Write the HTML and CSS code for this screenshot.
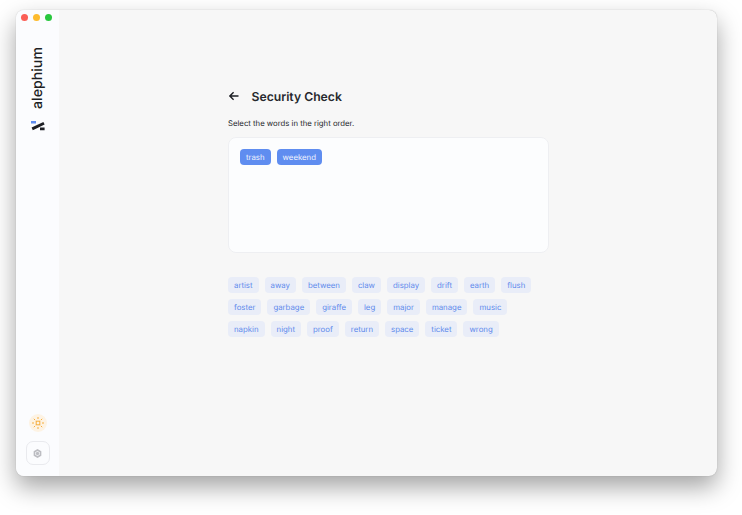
FILE: index.html
```html
<!DOCTYPE html>
<html lang="en">
<head>
  <meta charset="UTF-8">
  <title>Security Check</title>
  <link rel="stylesheet" href="styles.css">
</head>
<body>
  <div class="window">
    <div class="lights">
      <span class="light red"></span>
      <span class="light yellow"></span>
      <span class="light green"></span>
    </div>

    <div class="sidebar">
      <div class="brand">
        <div class="wordmark">alephium</div>
        <svg class="logo" width="14" height="10" viewBox="0 0 14 10">
          <path d="M0 0h5v2.4H0z" fill="#5f8df0"/>
          <path d="M0.6 6.6L12.4 1l1.2 2.4L1.8 9.2z" fill="#1d1f24"/>
          <path d="M9 6.6h4.6v2.6H9z" fill="#1d1f24"/>
        </svg>
      </div>
      <div class="side-bottom">
        <div class="theme-btn">
          <svg width="12" height="12" viewBox="0 0 12 12" fill="none" stroke="#f6ad3c" stroke-width="1">
            <rect x="4.2" y="4.2" width="3.6" height="3.6"/>
            <path d="M6 0v2M6 10v2M0 6h2M10 6h2M1.8 1.8l1.3 1.3M8.9 8.9l1.3 1.3M1.8 10.2l1.3-1.3M8.9 3.1l1.3-1.3"/>
          </svg>
        </div>
        <div class="settings-btn">
          <svg width="9" height="9" viewBox="0 0 9 9" fill="none" stroke="#bcbdc2" stroke-width="1.7">
            <path d="M4.5 1L7.5 2.7V6.3L4.5 8L1.5 6.3V2.7Z"/>
            <circle cx="4.5" cy="4.5" r="0.8"/>
          </svg>
        </div>
      </div>
    </div>

    <div class="main">
      <div class="title-row">
        <svg class="back" width="12" height="12" viewBox="0 0 12 12" fill="none" stroke="#1d1f24" stroke-width="1.4">
          <path d="M10.5 6H2M5.6 2.2L1.8 6l3.8 3.8"/>
        </svg>
        <h1>Security Check</h1>
      </div>
      <p class="hint">Select the words in the right order.</p>

      <div class="selected-box">
        <span class="chip active">trash</span>
        <span class="chip active">weekend</span>
      </div>

      <div class="words">
        <span class="chip">artist</span>
        <span class="chip">away</span>
        <span class="chip">between</span>
        <span class="chip">claw</span>
        <span class="chip">display</span>
        <span class="chip">drift</span>
        <span class="chip">earth</span>
        <span class="chip">flush</span>
        <span class="chip">foster</span>
        <span class="chip">garbage</span>
        <span class="chip">giraffe</span>
        <span class="chip">leg</span>
        <span class="chip">major</span>
        <span class="chip">manage</span>
        <span class="chip">music</span>
        <span class="chip">napkin</span>
        <span class="chip">night</span>
        <span class="chip">proof</span>
        <span class="chip">return</span>
        <span class="chip">space</span>
        <span class="chip">ticket</span>
        <span class="chip">wrong</span>
      </div>
    </div>
  </div>
</body>
</html>
```

FILE: styles.css
```css
html, body{
  height: 100%;
}
body{
  margin: 0;
  padding: 10px 25px 39px 16px;
  box-sizing: border-box;
  background: #ffffff;
  font-family: Inter, "Liberation Sans", sans-serif;
  text-rendering: geometricPrecision;
  overflow: hidden;
}
.window{
  position: relative;
  display: flex;
  height: 466px;
  border-radius: 8px;
  overflow: hidden;
  background: #f7f7f7;
  box-shadow: 0 11px 24px rgba(0,0,0,0.36), 0 0 1px rgba(0,0,0,0.3);
}
.lights{
  position: absolute;
  top: 4px;
  left: 5px;
  display: flex;
  gap: 5px;
}
.light{
  width: 7px;
  height: 7px;
  border-radius: 50%;
}
.red{ background: #fb5f57; }
.yellow{ background: #fdbb2e; }
.green{ background: #29c73f; }

.sidebar{
  width: 43px;
  flex-shrink: 0;
  box-sizing: border-box;
  padding: 37px 0 11px;
  display: flex;
  flex-direction: column;
  justify-content: space-between;
  align-items: center;
  background: #fbfcfe;
}
.brand{
  display: flex;
  flex-direction: column;
  align-items: center;
  gap: 12px;
}
.wordmark{
  writing-mode: vertical-rl;
  transform: rotate(180deg);
  font-size: 14.2px;
  font-weight: 500;
  line-height: 15px;
  color: #1d1f24;
}
.logo{
  display: block;
}
.side-bottom{
  display: flex;
  flex-direction: column;
  align-items: center;
  gap: 9px;
}
.theme-btn{
  width: 18px;
  height: 18px;
  border-radius: 50%;
  background: #fdf3e4;
  display: flex;
  align-items: center;
  justify-content: center;
}
.settings-btn{
  width: 24px;
  height: 24px;
  box-sizing: border-box;
  border: 1px solid #e9eaee;
  border-radius: 7px;
  display: flex;
  align-items: center;
  justify-content: center;
}

.main{
  flex: 1;
  padding: 78px 0 0 169px;
}
.title-row{
  display: flex;
  align-items: center;
  gap: 11.5px;
  height: 16px;
}
.back{
  display: block;
}
h1{
  margin: 0;
  font-size: 12.2px;
  font-weight: 600;
  color: #26282d;
}
.hint{
  margin: 14px 0 0;
  font-size: 7.75px;
  line-height: 10px;
  color: #26282d;
}
.selected-box{
  width: 321px;
  height: 116px;
  margin-top: 9px;
  padding: 11px;
  box-sizing: border-box;
  display: flex;
  align-items: flex-start;
  gap: 6px;
  background: #fcfdfe;
  border: 1px solid #eeeff2;
  border-radius: 8px;
}
.words{
  width: 310px;
  margin-top: 24px;
  display: flex;
  flex-wrap: wrap;
  gap: 6px;
}
.chip{
  height: 16px;
  padding: 0 6px;
  box-sizing: border-box;
  border-radius: 4px;
  font-size: 7.8px;
  line-height: 16px;
  color: #5f8bec;
  background: #e9edf8;
}
.chip.active{
  color: #f0f4fe;
  background: #5f8df0;
}
```
